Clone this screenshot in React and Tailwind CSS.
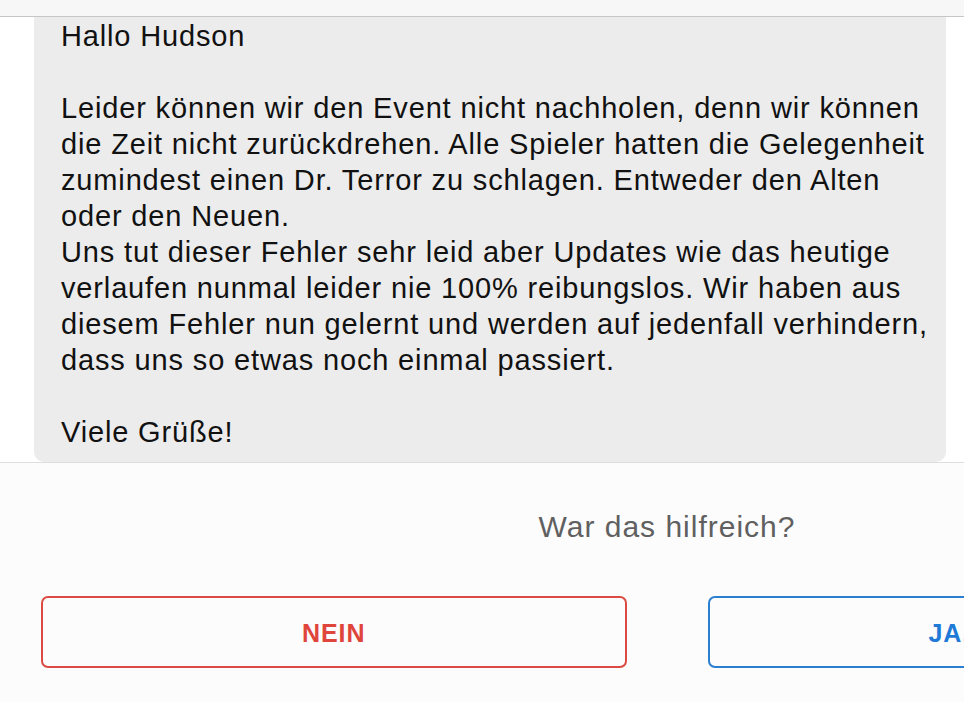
export default function App() {
    const lines = [
        "Hallo Hudson",
        "",
        "Leider können wir den Event nicht nachholen, denn wir können",
        "die Zeit nicht zurückdrehen. Alle Spieler hatten die Gelegenheit",
        "zumindest einen Dr. Terror zu schlagen. Entweder den Alten",
        "oder den Neuen.",
        "Uns tut dieser Fehler sehr leid aber Updates wie das heutige",
        "verlaufen nunmal leider nie 100% reibungslos. Wir haben aus",
        "diesem Fehler nun gelernt und werden auf jedenfall verhindern,",
        "dass uns so etwas noch einmal passiert.",
        "",
        "Viele Grüße!",
    ]

    return (
        <div className="w-[964px] h-[702px] overflow-hidden bg-white font-['Liberation_Sans',Arial,sans-serif]">
            <div className="w-[1334px]">
                <div className="h-[17px] bg-[#f7f7f7] border-b border-[#c6c6c6]"></div>
                <div className="bg-white">
                    <div className="ml-[34px] w-[912px] bg-[#ececec] rounded-b-[10px] pl-[27px] pt-[1px] pb-[12px] text-[29px] tracking-[0.85px] leading-[36px] text-[#111]">
                        {lines.map((line, i) => (
                            <div key={i} className="h-[36px] whitespace-nowrap">{line}</div>
                        ))}
                    </div>
                </div>
                <div className="h-[240px] bg-[#fcfcfc] border-t border-[#dedede]">
                    <div className="pt-[47px] h-[133px] text-center text-[30px] tracking-[1px] leading-[34px] text-[#606060]">
                        War das hilfreich?
                    </div>
                    <div className="flex px-[41px] gap-[81px]">
                        <button className="w-[586px] h-[72px] pt-[3px] rounded-[7px] border-2 border-[#dc4b43] text-[#e0453c] font-bold text-[25px] tracking-[1px]">
                            NEIN
                        </button>
                        <button className="w-[586px] h-[72px] pt-[3px] rounded-[7px] border-2 border-[#2a7fd0] text-[#1e7ad6] font-bold text-[25px] tracking-[1px]">
                            JA, DANKE
                        </button>
                    </div>
                </div>
            </div>
        </div>
    )
}
